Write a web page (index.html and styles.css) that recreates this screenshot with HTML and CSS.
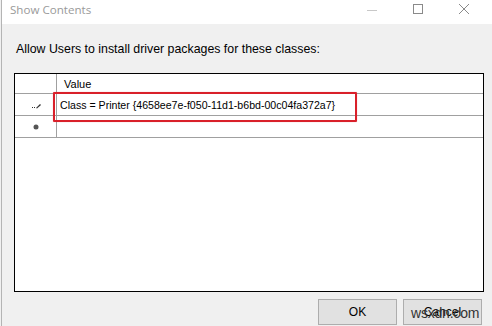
FILE: index.html
```html
<!DOCTYPE html>
<html>
<head>
<meta charset="utf-8">
<link rel="stylesheet" href="styles.css">
</head>
<body>
<div class="window">
  <div class="titlebar">
    <span class="title">Show Contents</span>
    <div class="controls">
      <svg class="ctl" width="46" height="24" viewBox="0 0 46 24"><line x1="17" y1="10.5" x2="27" y2="10.5" stroke="#c8c8c8" stroke-width="1"/></svg>
      <svg class="ctl" width="46" height="24" viewBox="0 0 46 24"><rect x="17.5" y="4.5" width="9" height="9" fill="none" stroke="#8a8a8a" stroke-width="1"/></svg>
      <svg class="ctl" width="46" height="24" viewBox="0 0 46 24"><path d="M17 4 L27 14 M27 4 L17 14" stroke="#8a8a8a" stroke-width="1"/></svg>
    </div>
  </div>
  <div class="content">
    <p class="label">Allow Users to install driver packages for these classes:</p>
    <div class="grid">
      <div class="row head">
        <div class="rh"></div>
        <div class="cell">Value</div>
      </div>
      <div class="row">
        <div class="rh">
          <svg width="12" height="10" viewBox="0 0 12 10"><rect x="2" y="7" width="1" height="1" fill="#333"/><rect x="4" y="7" width="1" height="1" fill="#333"/><path d="M6 8 L10 4 L11 5 L7 8.5 Z" fill="#333"/></svg>
        </div>
        <div class="cell">Class = Printer {4658ee7e-f050-11d1-b6bd-00c04fa372a7}</div>
      </div>
      <div class="row">
        <div class="rh">
          <svg width="12" height="10" viewBox="0 0 12 10"><circle cx="6" cy="5" r="2.5" fill="#555"/></svg>
        </div>
        <div class="cell"></div>
      </div>
      <div class="highlight"></div>
    </div>
    <div class="buttons">
      <button class="btn">OK</button>
      <button class="btn">Cancel</button>
    </div>
    <span class="watermark">wsxdn.com</span>
  </div>
</div>
</body>
</html>
```
FILE: styles.css
```css
html, body {
  margin: 0;
  padding: 0;
}
body {
  width: 492px;
  height: 326px;
  overflow: hidden;
  background: #f0f0f0;
  font-family: "Liberation Sans", Arial, sans-serif;
}
.window {
  position: relative;
  height: 326px;
  border-left: 1px solid #b4b4b4;
  margin-left: 1px;
  box-sizing: border-box;
}
.titlebar {
  height: 24px;
  background: #fff;
  display: flex;
  align-items: center;
  justify-content: space-between;
}
.title {
  margin-left: 8px;
  font-family: "Open Sans", "Liberation Sans", sans-serif;
  font-size: 11.6px;
  color: #9a9a9a;
  margin-top: -5px;
}
.controls {
  display: flex;
  align-self: flex-start;
  margin-right: 4px;
}
.ctl { display: block; }
.content {
  padding: 0 7px 0 12px;
}
.label {
  margin: 17px 0 0 2px;
  font-size: 12.35px;
  color: #000;
  line-height: 16px;
  height: 32px;
}
.grid {
  position: relative;
  width: 470px;
  height: 219px;
  box-sizing: border-box;
  border: 1px solid #000;
  background: #fff;
}
.row {
  display: flex;
  height: 22px;
  border-bottom: 1px solid #a0a0a0;
  box-sizing: border-box;
}
.row.head { height: 20px; }
.rh {
  width: 41px;
  border-right: 1px solid #a0a0a0;
  display: flex;
  align-items: center;
  justify-content: center;
}
.cell {
  flex: 1;
  font-size: 10.6px;
  color: #000;
  display: flex;
  align-items: center;
  padding-left: 3px;
}
.head .cell { padding-left: 7px; font-size: 11px; }
.highlight {
  position: absolute;
  left: 38px;
  top: 18px;
  width: 304px;
  height: 30px;
  box-sizing: border-box;
  border: 2.5px solid #d9202a;
  border-radius: 1px;
  box-shadow: 0 0 1px rgba(217,32,42,0.5);
}
.buttons {
  display: flex;
  justify-content: flex-end;
  gap: 6px;
  margin-top: 7px;
  padding-right: 3px;
}
.btn {
  width: 79px;
  height: 26px;
  background: #e1e1e1;
  border: 1px solid #adadad;
  font-family: "Liberation Sans", Arial, sans-serif;
  font-size: 12px;
  color: #000;
  padding: 0;
}
.watermark {
  position: absolute;
  left: 409px;
  top: 305px;
  font-family: "Liberation Sans", Arial, sans-serif;
  font-size: 14px;
  color: #333;
  letter-spacing: -0.2px;
}
```
